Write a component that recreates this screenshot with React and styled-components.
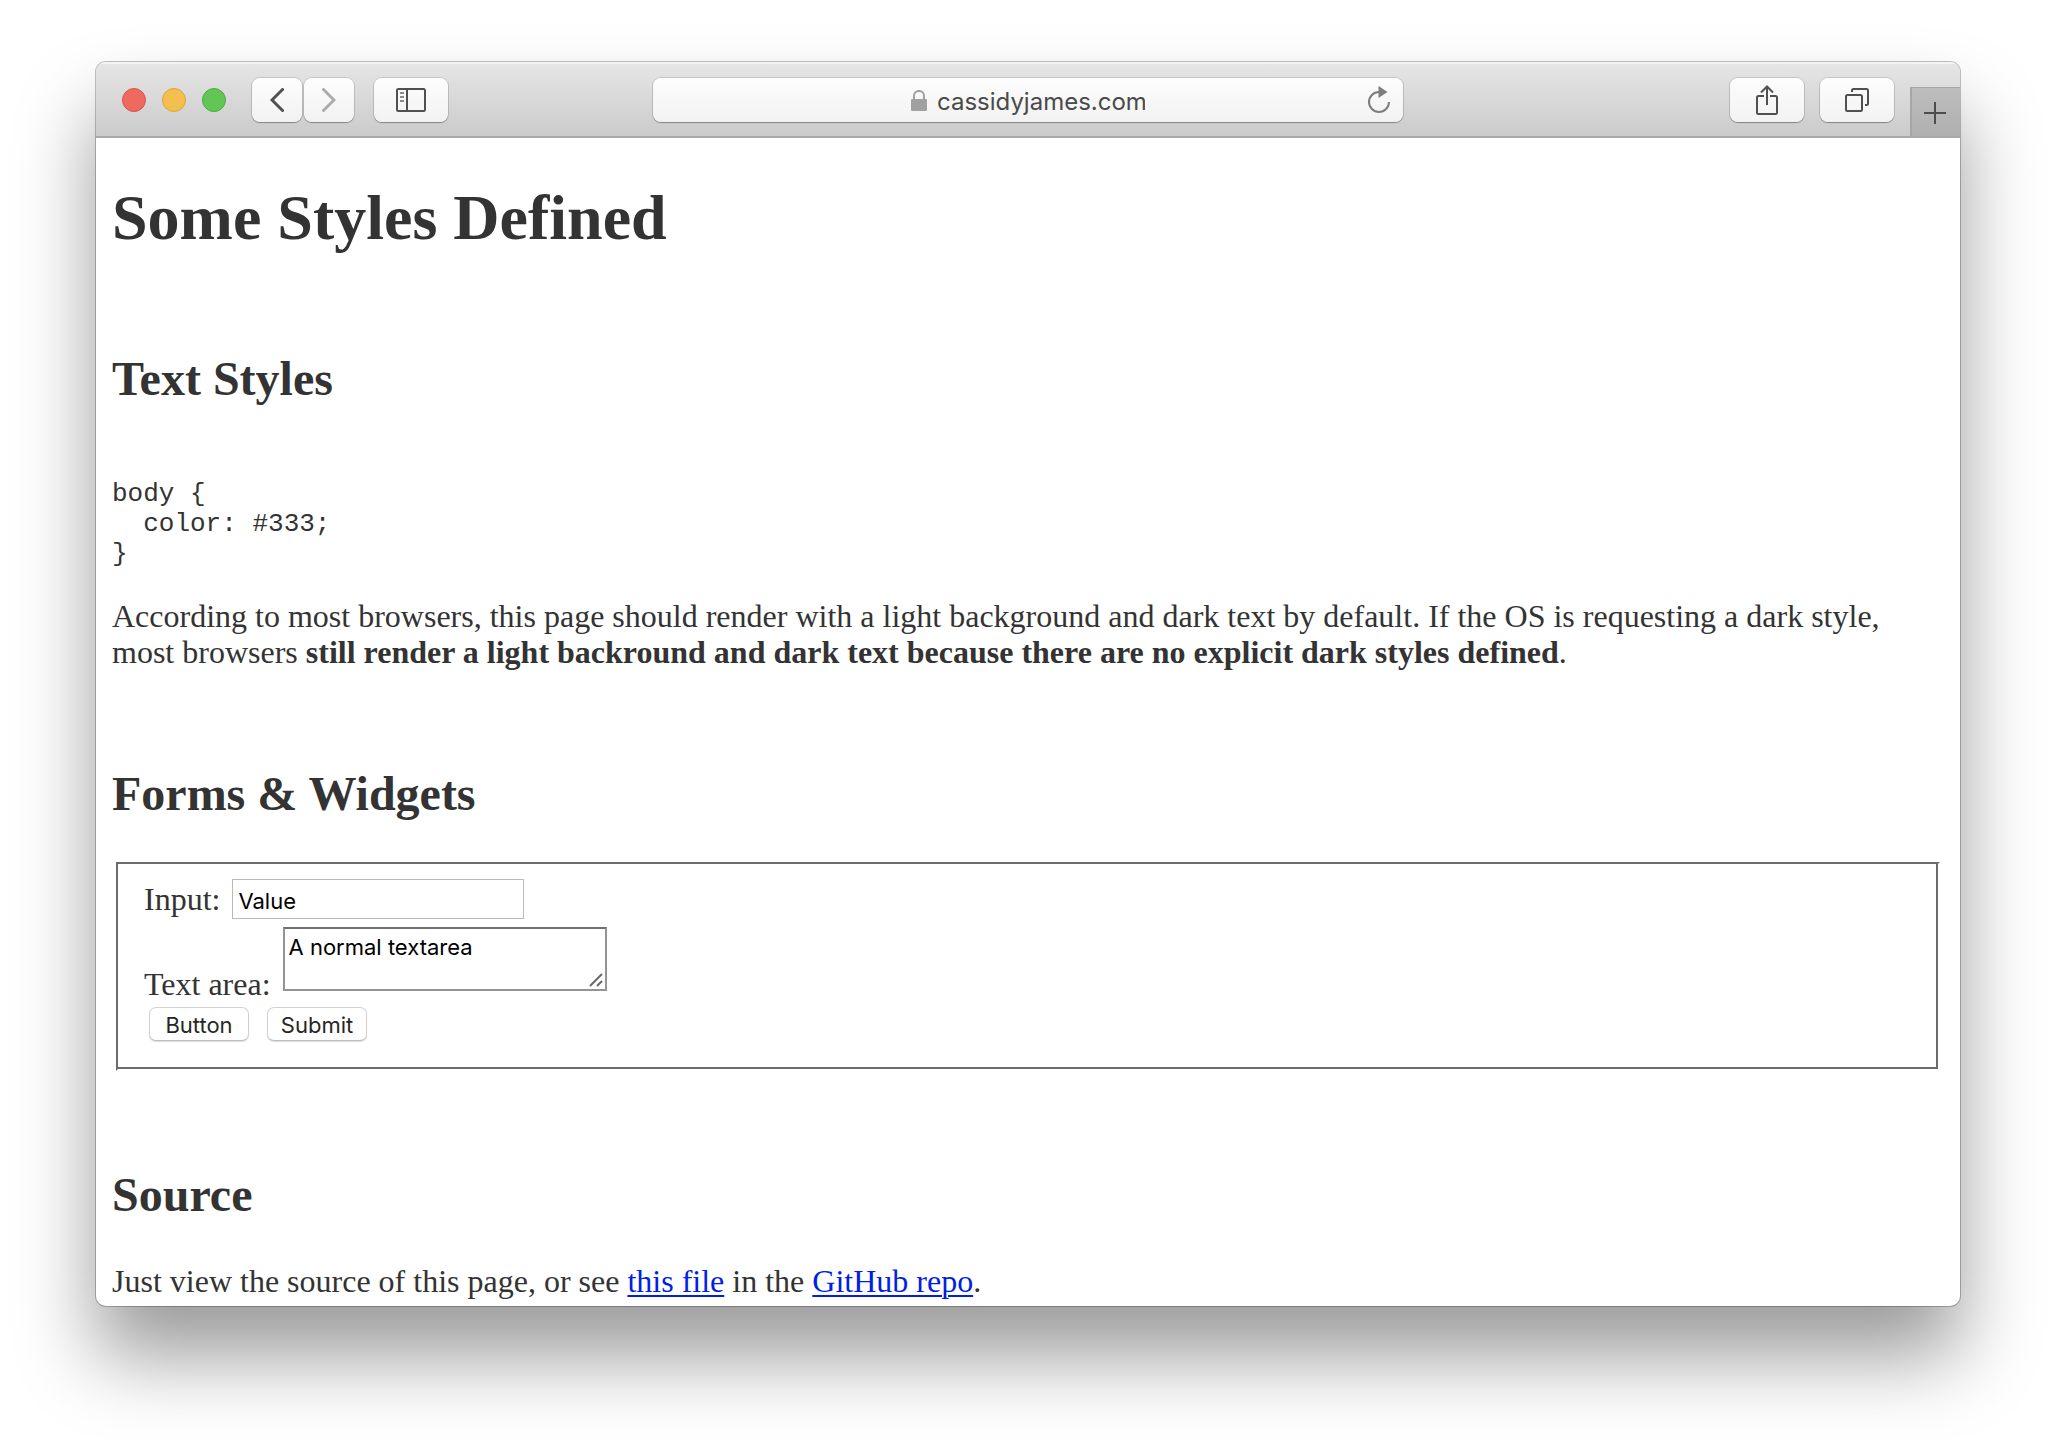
import React from "react";
import styled, { createGlobalStyle } from "styled-components";

const GlobalStyle = createGlobalStyle`
  *, *::before, *::after { box-sizing: border-box; }
  body { margin: 0; background: #fff; }
`;

const serif = `"Liberation Serif", "Times New Roman", serif`;
const mono = `"Liberation Mono", "Courier New", monospace`;
const ui = `Inter, Roboto, sans-serif`;

const Desktop = styled.div`
  display: flex;
  height: 100vh;
  padding: 62px 96px 134px;
`;

const BrowserWindow = styled.div`
  flex: 1;
  min-width: 0;
  display: flex;
  flex-direction: column;
  overflow: hidden;
  border-radius: 10px;
  background: #fff;
  box-shadow: 0 0 0 1px rgba(0, 0, 0, 0.24), 0 50px 80px rgba(0, 0, 0, 0.4);
`;

const Toolbar = styled.header`
  flex: none;
  display: grid;
  grid-template-columns: 1fr minmax(0, 750px) 1fr;
  align-items: center;
  height: 76px;
  padding-top: 2px;
  border-bottom: 2px solid #a9a9a9;
  background: linear-gradient(#e6e6e6, #cbcbcb);
  box-shadow: inset 0 2px 0 #f3f3f3;
`;

const ToolbarStart = styled.div`
  display: flex;
  align-items: center;
  padding-left: 26px;
`;

const ToolbarEnd = styled.div`
  display: flex;
  align-items: center;
  justify-content: flex-end;
  gap: 16px;
  height: 100%;
`;

const Lights = styled.div`
  display: flex;
  gap: 16px;
  margin-right: 26px;
`;

const Light = styled.button`
  width: 24px;
  height: 24px;
  padding: 0;
  border: 1px solid ${(p) => p.$edge};
  border-radius: 50%;
  background: ${(p) => p.$fill};
`;

const NavGroup = styled.div`
  display: flex;
  gap: 2px;
  margin-right: 20px;
`;

const raised = `
  border: 0;
  border-radius: 8px;
  background: linear-gradient(#fdfdfd, #f2f2f2);
  box-shadow: 0 0 0 1px rgba(0, 0, 0, 0.12), 0 1px 1px rgba(0, 0, 0, 0.28);
`;

const ToolButton = styled.button`
  ${raised}
  display: flex;
  align-items: center;
  justify-content: center;
  width: ${(p) => (p.$narrow ? "50px" : "74px")};
  height: 44px;
  padding: 0;
  color: ${(p) => (p.$dim ? "#adadad" : "#505050")};
`;

const NewTab = styled.button`
  display: flex;
  align-items: center;
  justify-content: center;
  align-self: flex-end;
  width: 50px;
  height: 49px;
  padding: 2px 2px 0 0;
  border: solid #a6a6a6;
  border-width: 1px 0 0 2px;
  background: linear-gradient(#bdbdbd, #b0b0b0);
  color: #4c4c4c;
`;

const AddressBar = styled.div`
  ${raised}
  display: grid;
  grid-template-columns: 1fr auto 1fr;
  align-items: center;
  height: 44px;
  padding: 0 12px;
`;

const Address = styled.label`
  grid-column: 2;
  display: flex;
  align-items: center;
  gap: 10px;
`;

const AddressInput = styled.input`
  width: 208px;
  height: 38px;
  padding: 2px 0 0;
  border: 0;
  outline: 0;
  background: none;
  color: #4a4a4a;
  font: 24px ${ui};
`;

const Reload = styled.button`
  justify-self: end;
  display: flex;
  padding: 0;
  border: 0;
  background: none;
  color: #7d7d7d;
`;

const Page = styled.main`
  flex: 1;
  min-height: 0;
  overflow: hidden;
  padding: 43px 16px 0;
  color: #333;
  font: 32px/36px ${serif};
`;

const Title = styled.h1`
  margin: 0;
  font-size: 64px;
  line-height: 74px;
`;

const Section = styled.section`
  margin-top: 96px;
`;

const Heading = styled.h2`
  margin: 0 0 40px;
  font-size: 48px;
  line-height: 56px;
`;

const Code = styled.pre`
  margin: 0;
  padding: 32px 0 29px;
  font: 26px/30px ${mono};
`;

const Paragraph = styled.p`
  margin: 0;
`;

const Link = styled.a`
  color: #001ee6;
  text-decoration-thickness: 2px;
  text-underline-offset: 3px;
`;

const Fieldset = styled.fieldset`
  display: flex;
  flex-direction: column;
  min-width: 0;
  margin: 0 4px;
  padding: 15px 26px 28px;
  border: 2px solid;
  border-color: #6c6c6c #fff #fff #6c6c6c;
  box-shadow: inset -2px -2px 0 #6c6c6c;
`;

const Field = styled.div`
  display: flex;
  align-items: ${(p) => (p.$low ? "flex-end" : "center")};
  gap: 12px;
  margin-bottom: ${(p) => (p.$low ? "5px" : "8px")};
`;

const TextInput = styled.input`
  width: 292px;
  height: 40px;
  padding: 4px 5px 0;
  border: 1px solid #b9b9b9;
  outline: 0;
  background: #fff;
  color: #000;
  font: 22px ${ui};
`;

const AreaBox = styled.div`
  position: relative;
  display: flex;
  padding-bottom: 11px;
`;

const TextArea = styled.textarea`
  width: 324px;
  height: 64px;
  padding: 4px;
  border: 2px solid #949494;
  border-top-color: #707070;
  outline: 0;
  overflow: hidden;
  resize: none;
  background: #fff;
  color: #000;
  font: 22px/28px ${ui};
`;

const Grip = styled.svg`
  position: absolute;
  right: 4px;
  bottom: 15px;
`;

const Buttons = styled.div`
  display: flex;
  gap: 18px;
  padding-left: 5px;
`;

const PushButton = styled.button`
  min-width: 100px;
  height: 34px;
  padding: 1px 12px 0;
  border: 1px solid #d2d2d2;
  border-bottom-color: #bdbdbd;
  border-radius: 7px;
  background: #fff;
  box-shadow: 0 1px 1px rgba(0, 0, 0, 0.14);
  color: #262626;
  font: 22px/30px ${ui};
`;

const Icon = ({ w, h, width = 2, children }) => (
  <svg
    width={w}
    height={h}
    viewBox={`0 0 ${w} ${h}`}
    fill="none"
    stroke="currentColor"
    strokeWidth={width}
    aria-hidden="true"
  >
    {children}
  </svg>
);

export default function App() {
  return (
    <>
      <GlobalStyle />
      <Desktop>
        <BrowserWindow>
          <Toolbar>
            <ToolbarStart>
              <Lights>
                <Light aria-label="Close" $fill="#ee6a5f" $edge="#d9544a" />
                <Light aria-label="Minimize" $fill="#f5bf4f" $edge="#dba53b" />
                <Light aria-label="Zoom" $fill="#62c655" $edge="#4eaa41" />
              </Lights>
              <NavGroup>
                <ToolButton $narrow aria-label="Back">
                  <Icon w={14} h={24} width={3}>
                    <path d="M12.5 1.5 L2 12 L12.5 22.5" strokeLinecap="round" />
                  </Icon>
                </ToolButton>
                <ToolButton $narrow $dim aria-label="Forward">
                  <Icon w={14} h={24} width={3}>
                    <path d="M1.5 1.5 L12 12 L1.5 22.5" strokeLinecap="round" />
                  </Icon>
                </ToolButton>
              </NavGroup>
              <ToolButton aria-label="Show sidebar">
                <Icon w={30} h={24}>
                  <rect x="1" y="1" width="28" height="22" rx="1.5" />
                  <path d="M11 1 V23" />
                  <path d="M4 5 H8 M4 9 H8 M4 13 H8" stroke="#8c8c8c" />
                </Icon>
              </ToolButton>
            </ToolbarStart>
            <AddressBar>
              <Address>
                <svg width="16" height="21" viewBox="0 0 16 21" aria-hidden="true">
                  <path
                    d="M3 11 V6 C3 -0.7 13 -0.7 13 6 V11"
                    fill="none"
                    stroke="#a0a0a0"
                    strokeWidth="2"
                  />
                  <rect y="9" width="16" height="12" rx="1" fill="#a0a0a0" />
                </svg>
                <AddressInput aria-label="Address" defaultValue="cassidyjames.com" />
              </Address>
              <Reload aria-label="Reload">
                <Icon w={24} h={28}>
                  <path d="M12 6 A10 10 0 1 0 22 16" />
                  <path d="M11.5 0 L20.5 6 L11.5 12 Z" fill="currentColor" stroke="none" />
                </Icon>
              </Reload>
            </AddressBar>
            <ToolbarEnd>
              <ToolButton aria-label="Share">
                <Icon w={22} h={32}>
                  <path d="M8 12 H2.5 Q1 12 1 13.5 V28.5 Q1 30 2.5 30 H19.5 Q21 30 21 28.5 V13.5 Q21 12 19.5 12 H14" />
                  <path d="M11 21 V3 M5 8.5 L11 2.5 L17 8.5" />
                </Icon>
              </ToolButton>
              <ToolButton aria-label="Show tabs">
                <Icon w={24} h={24}>
                  <rect x="1" y="7" width="16" height="16" rx="1.5" />
                  <path d="M7 4 V2.5 Q7 1 8.5 1 H21.5 Q23 1 23 2.5 V15.5 Q23 17 21.5 17 H20" />
                </Icon>
              </ToolButton>
              <NewTab aria-label="New tab">
                <Icon w={22} h={22}>
                  <path d="M11 0 V22 M0 11 H22" />
                </Icon>
              </NewTab>
            </ToolbarEnd>
          </Toolbar>

          <Page>
            <Title>Some Styles Defined</Title>

            <Section>
              <Heading>Text Styles</Heading>
              <Code>{"body {\n  color: #333;\n}"}</Code>
              <Paragraph>
                According to most browsers, this page should render with a light
                background and dark text by default. If the OS is requesting a
                dark style, most browsers{" "}
                <strong>
                  still render a light backround and dark text because there are
                  no explicit dark styles defined
                </strong>
                .
              </Paragraph>
            </Section>

            <Section>
              <Heading>Forms &amp; Widgets</Heading>
              <Fieldset>
                <Field>
                  <label htmlFor="value">Input:</label>
                  <TextInput id="value" defaultValue="Value" />
                </Field>
                <Field $low>
                  <label htmlFor="area">Text area:</label>
                  <AreaBox>
                    <TextArea id="area" defaultValue="A normal textarea" />
                    <Grip width="14" height="14" viewBox="0 0 14 14" aria-hidden="true">
                      <path d="M1 13 L13 1 M8 13 L13 8" stroke="#6a6a6a" strokeWidth="2" />
                    </Grip>
                  </AreaBox>
                </Field>
                <Buttons>
                  <PushButton type="button">Button</PushButton>
                  <PushButton type="submit">Submit</PushButton>
                </Buttons>
              </Fieldset>
            </Section>

            <Section>
              <Heading>Source</Heading>
              <Paragraph>
                Just view the source of this page, or see{" "}
                <Link href="#file">this file</Link> in the{" "}
                <Link href="#repo">GitHub repo</Link>.
              </Paragraph>
            </Section>
          </Page>
        </BrowserWindow>
      </Desktop>
    </>
  );
}
